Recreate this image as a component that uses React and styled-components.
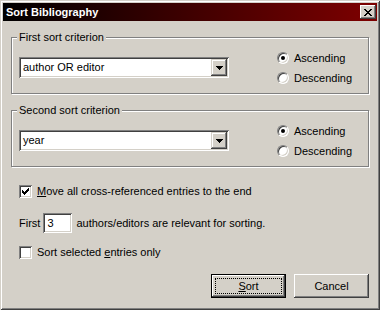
import React from "react";
import styled, { createGlobalStyle } from "styled-components";

const face = "#d4d0c8";
const gray = "#808080";
const dark = "#404040";
const white = "#ffffff";

const GlobalStyle = createGlobalStyle`
  html, body {
    margin: 0;
    padding: 0;
    background: ${face};
  }
  body {
    font-family: "Liberation Sans", Arial, sans-serif;
    font-size: 11px;
    color: #000;
  }
  * {
    box-sizing: border-box;
  }
`;

const Window = styled.div`
  width: 380px;
  height: 310px;
  padding: 3px;
  background: ${face};
  display: flex;
  flex-direction: column;
  box-shadow: inset 1px 1px 0 ${face}, inset -1px -1px 0 ${dark},
    inset 2px 2px 0 ${white}, inset -2px -2px 0 ${gray};
`;

const TitleBar = styled.div`
  height: 18px;
  display: flex;
  align-items: center;
  justify-content: space-between;
  padding: 0 1px 0 3px;
  background: linear-gradient(to right, #000000, #7e0000);
`;

const Title = styled.span`
  color: #fff;
  font-weight: bold;
  font-size: 11px;
`;

const CloseButton = styled.div`
  width: 16px;
  height: 14px;
  display: flex;
  align-items: center;
  justify-content: center;
  background: ${face};
  box-shadow: inset -1px -1px 0 ${dark}, inset 1px 1px 0 ${white},
    inset -2px -2px 0 ${gray};
`;

const Body = styled.div`
  flex: 1;
  display: flex;
  flex-direction: column;
  padding: 16px 8px 0 8px;
`;

const Group = styled.div`
  position: relative;
  height: 57px;
  margin-top: ${(p) => p.$gap || 0}px;
  padding: 10px 0 0 7px;
  display: flex;
  align-items: flex-start;
  border: 1px solid ${gray};
  box-shadow: inset 1px 1px 0 ${white}, 1px 1px 0 ${white};
`;

const Legend = styled.span`
  position: absolute;
  top: -7px;
  left: 5px;
  padding: 0 2px;
  line-height: 13px;
  background: ${face};
`;

const Combo = styled.div`
  width: 210px;
  height: 21px;
  margin-top: 9px;
  padding: 2px;
  display: flex;
  align-items: stretch;
  background: #fff;
  box-shadow: inset 1px 1px 0 ${gray}, inset -1px -1px 0 ${white},
    inset 2px 2px 0 ${dark}, inset -2px -2px 0 ${face};
`;

const ComboText = styled.span`
  flex: 1;
  padding-left: 2px;
  line-height: 17px;
`;

const ArrowButton = styled.div`
  width: 16px;
  display: flex;
  align-items: center;
  justify-content: center;
  background: ${face};
  box-shadow: inset -1px -1px 0 ${dark}, inset 1px 1px 0 ${face},
    inset -2px -2px 0 ${gray}, inset 2px 2px 0 ${white};
`;

const RadioColumn = styled.div`
  margin-left: 48px;
  display: flex;
  flex-direction: column;
`;

const RadioRow = styled.div`
  height: 20px;
  display: flex;
  align-items: center;
  gap: 5px;
`;

const RadioCircle = styled.span`
  position: relative;
  width: 12px;
  height: 12px;
  border-radius: 50%;
  background: #fff;
  border: 1px solid;
  border-color: ${gray} ${white} ${white} ${gray};
  box-shadow: inset 1px 1px 0 ${dark}, inset -1px -1px 0 ${face};

  &::after {
    content: "";
    display: ${(p) => (p.$checked ? "block" : "none")};
    position: absolute;
    left: 3px;
    top: 3px;
    width: 4px;
    height: 4px;
    border-radius: 50%;
    background: #000;
  }
`;

const CheckRow = styled.div`
  height: 13px;
  margin: ${(p) => p.$gap}px 0 0 8px;
  display: flex;
  align-items: center;
  gap: 5px;
  line-height: 13px;
`;

const CheckBox = styled.span`
  width: 13px;
  height: 13px;
  display: flex;
  align-items: center;
  justify-content: center;
  background: #fff;
  box-shadow: inset 1px 1px 0 ${gray}, inset -1px -1px 0 ${white},
    inset 2px 2px 0 ${dark}, inset -2px -2px 0 ${face};
`;

const CountRow = styled.div`
  height: 20px;
  margin: 15px 0 0 8px;
  display: flex;
  align-items: center;
`;

const CountInput = styled.div`
  width: 29px;
  height: 20px;
  margin: 0 4px 0 3px;
  padding: 2px 0 0 4px;
  line-height: 16px;
  background: #fff;
  box-shadow: inset 1px 1px 0 ${gray}, inset -1px -1px 0 ${white},
    inset 2px 2px 0 ${dark}, inset -2px -2px 0 ${face};
`;

const ButtonRow = styled.div`
  margin-top: 15px;
  display: flex;
  justify-content: flex-end;
  gap: 8px;
`;

const Button = styled.div`
  position: relative;
  width: 75px;
  height: 24px;
  display: flex;
  align-items: center;
  justify-content: center;
  background: ${face};
  border: ${(p) => (p.$default ? "1px solid #000" : "none")};
  box-shadow: inset -1px -1px 0 ${dark}, inset 1px 1px 0 ${white},
    inset -2px -2px 0 ${gray};

  &::after {
    content: "";
    display: ${(p) => (p.$default ? "block" : "none")};
    position: absolute;
    inset: 3px;
    border: 1px dotted #000;
  }
`;

const Key = styled.span`
  text-decoration: underline;
`;

const ArrowGlyph = () => (
  <svg width="7" height="4" viewBox="0 0 7 4" shapeRendering="crispEdges">
    <path d="M0 0h7v1H0zM1 1h5v1H1zM2 2h3v1H2zM3 3h1v1H3z" fill="#000" />
  </svg>
);

const CloseGlyph = () => (
  <svg width="8" height="7" viewBox="0 0 8 7" shapeRendering="crispEdges">
    <path
      d="M0 0h2v1H0zM6 0h2v1H6zM1 1h2v1H1zM5 1h2v1H5zM2 2h4v1H2zM3 3h2v1H3zM2 4h4v1H2zM1 5h2v1H1zM5 5h2v1H5zM0 6h2v1H0zM6 6h2v1H6z"
      fill="#000"
    />
  </svg>
);

const CheckGlyph = () => (
  <svg width="7" height="7" viewBox="0 0 7 7" shapeRendering="crispEdges">
    <path
      d="M6 0h1v3H6zM5 1h1v3H5zM4 2h1v3H4zM3 3h1v3H3zM2 4h1v3H2zM1 3h1v3H1zM0 2h1v3H0z"
      fill="#000"
    />
  </svg>
);

const Radio = ({ label, checked }) => (
  <RadioRow>
    <RadioCircle $checked={checked} />
    <span>{label}</span>
  </RadioRow>
);

const CriterionGroup = ({ legend, value, gap }) => (
  <Group $gap={gap}>
    <Legend>{legend}</Legend>
    <Combo>
      <ComboText>{value}</ComboText>
      <ArrowButton>
        <ArrowGlyph />
      </ArrowButton>
    </Combo>
    <RadioColumn>
      <Radio label="Ascending" checked />
      <Radio label="Descending" />
    </RadioColumn>
  </Group>
);

export default function App() {
  return (
    <>
      <GlobalStyle />
      <Window>
        <TitleBar>
          <Title>Sort Bibliography</Title>
          <CloseButton>
            <CloseGlyph />
          </CloseButton>
        </TitleBar>
        <Body>
          <CriterionGroup legend="First sort criterion" value="author OR editor" />
          <CriterionGroup legend="Second sort criterion" value="year" gap={16} />

          <CheckRow $gap={18}>
            <CheckBox>
              <CheckGlyph />
            </CheckBox>
            <span>
              <Key>M</Key>ove all cross-referenced entries to the end
            </span>
          </CheckRow>

          <CountRow>
            <span>First</span>
            <CountInput>3</CountInput>
            <span>authors/editors are relevant for sorting.</span>
          </CountRow>

          <CheckRow $gap={13}>
            <CheckBox />
            <span>
              Sort selected <Key>e</Key>ntries only
            </span>
          </CheckRow>

          <ButtonRow>
            <Button $default>
              <span>
                <Key>S</Key>ort
              </span>
            </Button>
            <Button>Cancel</Button>
          </ButtonRow>
        </Body>
      </Window>
    </>
  );
}
